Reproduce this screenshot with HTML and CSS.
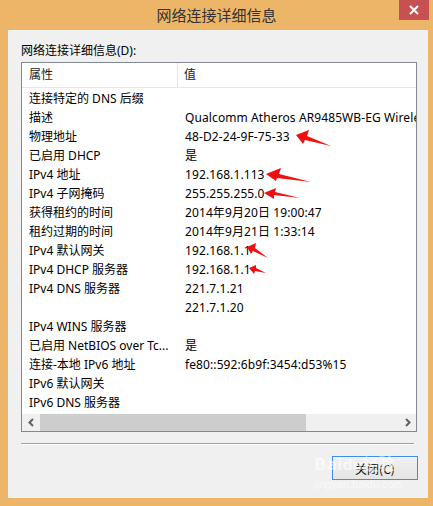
FILE: index.html
```html
<!DOCTYPE html>
<html lang="zh-CN">
<head>
<meta charset="utf-8">
<title>网络连接详细信息</title>
<link rel="stylesheet" href="styles.css">
</head>
<body>
<div class="window">
  <div class="titlebar">
    <span class="title">网络连接详细信息</span>
    <div class="close-btn">
      <svg width="10" height="10" viewBox="0 0 10 10"><path d="M1 1 L9 9 M9 1 L1 9" stroke="#fff" stroke-width="2"/></svg>
    </div>
  </div>
  <div class="client">
    <div class="label">网络连接详细信息(D):</div>
    <div class="listbox">
      <div class="header">
        <div class="hcell c1">属性</div>
        <div class="hcell c2">值</div>
      </div>
      <div class="rows">
        <div class="row"><div class="cell c1">连接特定的 DNS 后缀</div><div class="cell c2"></div></div>
        <div class="row"><div class="cell c1">描述</div><div class="cell c2">Qualcomm Atheros AR9485WB-EG Wireless Network Adapter</div></div>
        <div class="row"><div class="cell c1">物理地址</div><div class="cell c2">48-D2-24-9F-75-33</div></div>
        <div class="row"><div class="cell c1">已启用 DHCP</div><div class="cell c2">是</div></div>
        <div class="row"><div class="cell c1">IPv4 地址</div><div class="cell c2">192.168.1.113</div></div>
        <div class="row"><div class="cell c1">IPv4 子网掩码</div><div class="cell c2">255.255.255.0</div></div>
        <div class="row"><div class="cell c1">获得租约的时间</div><div class="cell c2">2014年9月20日 19:00:47</div></div>
        <div class="row"><div class="cell c1">租约过期的时间</div><div class="cell c2">2014年9月21日 1:33:14</div></div>
        <div class="row"><div class="cell c1">IPv4 默认网关</div><div class="cell c2">192.168.1.1</div></div>
        <div class="row"><div class="cell c1">IPv4 DHCP 服务器</div><div class="cell c2">192.168.1.1</div></div>
        <div class="row"><div class="cell c1">IPv4 DNS 服务器</div><div class="cell c2">221.7.1.21</div></div>
        <div class="row"><div class="cell c1"></div><div class="cell c2">221.7.1.20</div></div>
        <div class="row"><div class="cell c1">IPv4 WINS 服务器</div><div class="cell c2"></div></div>
        <div class="row"><div class="cell c1">已启用 NetBIOS over Tc...</div><div class="cell c2">是</div></div>
        <div class="row"><div class="cell c1">连接-本地 IPv6 地址</div><div class="cell c2">fe80::592:6b9f:3454:d53%15</div></div>
        <div class="row"><div class="cell c1">IPv6 默认网关</div><div class="cell c2"></div></div>
        <div class="row"><div class="cell c1">IPv6 DNS 服务器</div><div class="cell c2"></div></div>
      </div>
      <div class="hscroll">
        <div class="sbtn">
          <svg width="8" height="9" viewBox="0 0 8 9"><path d="M6 1 L2.5 4.5 L6 8" fill="none" stroke="#606060" stroke-width="2"/></svg>
        </div>
        <div class="track">
          <div class="thumb"></div>
        </div>
        <div class="sbtn">
          <svg width="8" height="9" viewBox="0 0 8 9"><path d="M2 1 L5.5 4.5 L2 8" fill="none" stroke="#606060" stroke-width="2"/></svg>
        </div>
      </div>
    </div>
    <div class="separator"></div>
    <div class="footer">
      <div class="button">关闭(C)</div>
    </div>
  </div>
  <div class="watermark">
    <span class="wm-logo">Bai<span class="wm-du">du</span>经验</span>
    <span class="wm-url">jingyan.baidu.com</span>
  </div>
  <svg class="arrows" width="433" height="506" viewBox="0 0 433 506">
    <polygon points="296,135 309,130 307,136 331,146 305,140 303,144" fill="#f01010"/>
    <polygon points="266,174 281,168 279,174 311,182 277,178 276,181" fill="#f01010"/>
    <polygon points="264,193 276,188 275,192 300,198 274,195 274,199" fill="#f01010"/>
    <polygon points="247,247 256,243 255,248 268,258 253,251 251,254" fill="#f01010"/>
    <polygon points="249,268 256,265 256,268 266,273 255,271 254,274" fill="#f01010"/>
  </svg>
</div>
</body>
</html>
```

FILE: styles.css
```css
html, body {
  margin: 0;
  padding: 0;
}

body {
  font-family: "Noto Sans", "Noto Sans CJK SC", sans-serif;
  font-size: 12px;
  color: #000;
}

.window {
  position: relative;
  width: 433px;
  height: 506px;
  background: #ecb568;
  overflow: hidden;
  display: flex;
  flex-direction: column;
}

.titlebar {
  height: 30px;
  flex: none;
  display: flex;
  align-items: center;
  justify-content: center;
  position: relative;
}

.title {
  font-family: "Noto Sans CJK SC", sans-serif;
  font-size: 15px;
  color: #333;
  margin-top: -1px;
}

.close-btn {
  position: absolute;
  top: 0;
  left: 399px;
  width: 30px;
  height: 20px;
  background: #c75050;
  display: flex;
  align-items: center;
  justify-content: center;
}

.client {
  margin: 0 5px 8px 8px;
  height: 468px;
  background: #f0f0f0;
  padding: 12px 0 0 13px;
  box-sizing: border-box;
  display: flex;
  flex-direction: column;
}

.label {
  height: 18px;
  line-height: 18px;
  color: #000;
}

.listbox {
  margin-top: 2px;
  width: 396px;
  height: 370px;
  box-sizing: border-box;
  border: 1px solid #828790;
  background: #fff;
  display: flex;
  flex-direction: column;
  overflow: hidden;
}

.header {
  height: 25px;
  flex: none;
  display: flex;
  box-sizing: border-box;
  border-bottom: 1px solid #e2e8f1;
}

.hcell {
  line-height: 24px;
  padding-left: 7px;
  box-sizing: border-box;
  color: #222;
}

.hcell.c1 {
  width: 156px;
  border-right: 1px solid #e2e8f1;
}

.rows {
  flex: 1;
  padding-top: 1px;
  overflow: hidden;
}

.row {
  height: 19px;
  display: flex;
}

.cell {
  line-height: 19px;
  white-space: nowrap;
  overflow: hidden;
  padding-left: 7px;
  box-sizing: border-box;
}

.cell.c1 {
  width: 156px;
  flex: none;
}

.cell.c2 {
  flex: 1;
  min-width: 0;
  padding-left: 7px;
  letter-spacing: 0.1px;
}

.hcell.c2 {
  flex: 1;
  padding-left: 6px;
}

.hscroll {
  height: 17px;
  flex: none;
  display: flex;
  background: #f0f0f0;
}

.sbtn {
  width: 17px;
  flex: none;
  display: flex;
  align-items: center;
  justify-content: center;
}

.track {
  flex: 1;
  display: flex;
  align-items: stretch;
  padding: 0 0 0 1px;
}

.thumb {
  width: 266px;
  background: #cdcdcd;
}

.separator {
  margin-top: 11px;
  width: 393px;
  height: 1px;
  background: #a0a0a0;
  border-bottom: 1px solid #fff;
}

.footer {
  display: flex;
  justify-content: flex-end;
  padding-right: 10px;
  margin-top: 11px;
}

.button {
  width: 86px;
  height: 24px;
  box-sizing: border-box;
  border: 1px solid #3c8ee8;
  background: linear-gradient(#f0f0f0, #e5e5e5);
  display: flex;
  align-items: center;
  justify-content: center;
  font-family: "Noto Sans CJK SC", sans-serif;
  font-size: 12px;
  color: #000;
}

.watermark {
  position: absolute;
  left: 314px;
  top: 454px;
  width: 100px;
  display: flex;
  flex-direction: column;
  align-items: flex-start;
  color: rgba(255, 255, 255, 0.6);
  pointer-events: none;
}

.wm-logo {
  font-family: "DejaVu Sans", "Noto Sans CJK SC", sans-serif;
  font-weight: bold;
  font-size: 16px;
  line-height: 22px;
}

.wm-du {
  font-size: 14px;
}

.wm-url {
  font-family: "Liberation Sans", sans-serif;
  font-size: 11px;
  line-height: 14px;
  margin-top: 1px;
}

.arrows {
  position: absolute;
  left: 0;
  top: 0;
  pointer-events: none;
}
```
